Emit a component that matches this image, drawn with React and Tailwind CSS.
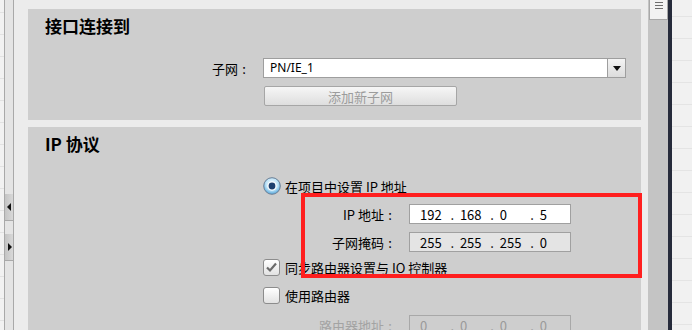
import React from "react";

function Octets({ values, color = "text-black", dotColor = "text-black" }) {
  return (
    <div className="flex items-center pl-[10px] h-full leading-none">
      {values.map((v, i) => (
        <React.Fragment key={i}>
          <span className={`w-[32px] ${color}`}>{v}</span>
          {i < 3 && <span className={`w-[10px] ${dotColor}`}>.</span>}
        </React.Fragment>
      ))}
    </div>
  );
}

function Label({ text, width, gray }) {
  return (
    <div className={`${width} shrink-0 flex justify-end items-center pr-[13px] leading-none ${gray ? "text-[#a3a3a3]" : "text-black"}`}>
      <span>{text}</span>
      <span className="w-[12px] text-center">:</span>
    </div>
  );
}

function Checkbox({ checked }) {
  return (
    <div className="w-[17px] h-[17px] shrink-0 rounded-[3px] border border-[#8c8c8c] bg-gradient-to-b from-[#ffffff] to-[#e2e2e2] flex items-center justify-center">
      {checked && (
        <svg width="13" height="13" viewBox="0 0 13 13">
          <path d="M2 6.5 L5 9.5 L11 2.5" fill="none" stroke="#6b6b6b" strokeWidth="2.2" />
        </svg>
      )}
    </div>
  );
}

function Radio() {
  return (
    <svg width="18" height="18" viewBox="0 0 18 18" className="shrink-0">
      <defs>
        <radialGradient id="rg" cx="50%" cy="40%" r="60%">
          <stop offset="0%" stopColor="#ffffff" />
          <stop offset="60%" stopColor="#bfe3f7" />
          <stop offset="100%" stopColor="#4fa3d8" />
        </radialGradient>
      </defs>
      <circle cx="9" cy="9" r="8.3" fill="url(#rg)" stroke="#6b7f96" strokeWidth="1" />
      <circle cx="9" cy="9" r="4.6" fill="#ffffff" />
      <circle cx="9" cy="9" r="3.4" fill="#1d3f6e" />
    </svg>
  );
}

export default function App() {
  const rows = Array.from({ length: 15 }, (_, i) => i);
  return (
    <div className="relative w-[692px] h-[330px] overflow-hidden bg-[#ececec] flex font-['Noto_Sans_CJK_SC',sans-serif] text-[13px] text-black">
      {/* far-left sliver */}
      <div className="w-[4px] h-full shrink-0 bg-[#f2f2f2] flex flex-col pt-[12px] gap-[21px]">
        {rows.map((i) => (
          <div key={i} className="h-px shrink-0 bg-[#e2e2e2]" />
        ))}
      </div>
      {/* left collapse strip */}
      <div className="w-[10px] h-full shrink-0 border-x border-[#a9a9a9] bg-[#e4e4e4] flex flex-col pt-[194px]">
        <div className="h-[27px] shrink-0 bg-gradient-to-r from-[#c4c4c4] to-[#d8d8d8] border-b border-[#a9a9a9] flex items-center justify-center">
          <svg width="5" height="8" viewBox="0 0 5 8"><path d="M4 0 L0 4 L4 8 Z" fill="#111" /></svg>
        </div>
        <div className="h-[13px] shrink-0" />
        <div className="h-[27px] shrink-0 bg-gradient-to-r from-[#c4c4c4] to-[#d8d8d8] border-b border-[#a9a9a9] flex items-center justify-center">
          <svg width="5" height="8" viewBox="0 0 5 8"><path d="M1 0 L5 4 L1 8 Z" fill="#111" /></svg>
        </div>
      </div>

      {/* main content */}
      <div className="w-[634px] h-full shrink-0 pl-[14px] pr-[7px] pt-[9px] flex flex-col gap-[7px]">
        {/* 接口连接到 */}
        <div className="h-[111px] shrink-0 bg-[#cecece] pt-[8px] pl-[17px] flex flex-col">
          <div className="text-[17px] font-bold leading-[17px]">接口连接到</div>
          <div className="mt-[24px] flex items-center h-[20px]">
            <Label text="子网" width="w-[218px]" />
            <div className="w-[345px] h-[20px] border border-[#9e9e9e] bg-white flex items-center pl-[6px] text-[12px] font-['Noto_Sans',sans-serif] leading-none">PN/IE_1</div>
            <div className="w-[18px] h-[20px] border border-l-0 border-[#9e9e9e] bg-gradient-to-b from-[#f4f4f4] to-[#dcdcdc] flex items-center justify-center">
              <svg width="8" height="5" viewBox="0 0 8 5"><path d="M0 0 L8 0 L4 5 Z" fill="#111" /></svg>
            </div>
          </div>
          <div className="mt-[8px] ml-[219px] w-[193px] h-[20px] rounded-[2px] border border-[#a6a6a6] bg-gradient-to-b from-[#f6f6f6] to-[#dedede] flex items-center justify-center text-[#9c9c9c] leading-none">
            添加新子网
          </div>
        </div>

        {/* IP 协议 */}
        <div className="h-[220px] shrink-0 bg-[#cecece] pt-[8px] pl-[17px] flex flex-col">
          <div className="text-[17px] font-bold leading-[17px]">IP 协议</div>
          <div className="mt-[25px] h-[18px] pl-[218px] flex items-center gap-[4px]">
            <Radio />
            <span className="leading-none">在项目中设置 IP 地址</span>
          </div>
          <div className="mt-[9px] flex items-center h-[20px]">
            <Label text="IP 地址" width="w-[364px]" />
            <div className="w-[162px] h-[20px] border border-[#a0a0a0] bg-white">
              <Octets values={["192", "168", "0", "5"]} />
            </div>
          </div>
          <div className="mt-[8px] flex items-center h-[20px]">
            <Label text="子网掩码" width="w-[364px]" />
            <div className="w-[162px] h-[20px] border border-[#a0a0a0] bg-[#e4e4e4]">
              <Octets values={["255", "255", "255", "0"]} />
            </div>
          </div>
          <div className="mt-[7px] h-[17px] pl-[218px] flex items-center gap-[5px]">
            <Checkbox checked />
            <span className="leading-none">同步路由器设置与 IO 控制器</span>
          </div>
          <div className="mt-[11px] h-[17px] pl-[218px] flex items-center gap-[5px]">
            <Checkbox />
            <span className="leading-none">使用路由器</span>
          </div>
          <div className="mt-[11px] flex items-center h-[20px]">
            <Label text="路由器地址" width="w-[364px]" gray />
            <div className="w-[162px] h-[20px] border border-[#a8a8a8] bg-[#cecece]">
              <Octets values={["0", "0", "0", "0"]} color="text-[#9a9a9a]" dotColor="text-[#9a9a9a]" />
            </div>
          </div>
        </div>
      </div>

      {/* scrollbar */}
      <div className="w-[20px] h-full shrink-0 bg-[#c4c4c4] flex flex-col">
        <div className="h-[20px] ml-px w-[19px] bg-[#f2f2f2] border border-t-0 border-[#a8a8a8] flex flex-col items-center pt-[2px] gap-[2px]">
          <div className="w-[8px] h-px bg-[#6d6d6d]" />
          <div className="w-[8px] h-px bg-[#6d6d6d]" />
          <div className="w-[8px] h-px bg-[#6d6d6d]" />
        </div>
      </div>
      <div className="w-[4px] h-full shrink-0 bg-[#262b3b]" />
      <div className="flex-1 h-full bg-[#f1f1f1] flex flex-col pt-[16px] gap-[21px]">
        {rows.map((i) => (
          <div key={i} className="h-px shrink-0 bg-[#e4e4e4]" />
        ))}
      </div>

      {/* red annotation box */}
      <div className="absolute left-[301px] top-[193px] w-[341px] h-[85px] border-[4px] border-[#ff1f1f]" />
    </div>
  );
}
